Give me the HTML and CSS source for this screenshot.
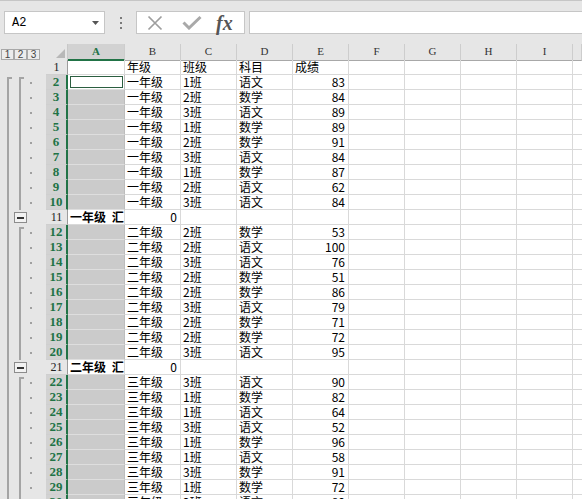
FILE: index.html
```html
<!DOCTYPE html>
<html lang="zh">
<head>
<meta charset="utf-8">
<title>Sheet</title>
<link rel="stylesheet" href="styles.css">
</head>
<body>
<div class="fbar">
  <div class="namebox"><span>A2</span><svg width="7" height="4" viewBox="0 0 7 4"><polygon points="0,0 7,0 3.5,4" fill="#555"/></svg></div>
  <div class="vdots"><i></i><i></i><i></i></div>
  <div class="fxbox">
    <svg class="ix" width="16" height="16" viewBox="0 0 16 16"><path d="M1.5 1.5 L14.5 14.5 M14.5 1.5 L1.5 14.5" stroke="#9e9e9e" stroke-width="1.7" fill="none"/></svg>
    <svg class="ic" width="20" height="15" viewBox="0 0 20 15"><polyline points="1.5,7.5 7,13 18.5,2" stroke="#a9a9a9" stroke-width="3" fill="none"/></svg>
    <span class="fx">fx</span>
  </div>
  <div class="finput"></div>
</div>
<div class="sheet">
  <div class="row hdr">
    <div class="lvls"><span>1</span><span>2</span><span>3</span></div>
    <div class="corner"><svg width="9" height="9" viewBox="0 0 9 9"><polygon points="9,0 9,9 0,9" fill="#b8b8b8"/></svg></div>
    <div class="ch sel">A</div><div class="ch">B</div><div class="ch">C</div><div class="ch">D</div><div class="ch">E</div><div class="ch">F</div><div class="ch">G</div><div class="ch">H</div><div class="ch">I</div><div class="ch"></div>
  </div>
  <div class="row"><div class="o"></div><div class="rh">1</div><div class="c"></div><div class="c">年级</div><div class="c">班级</div><div class="c">科目</div><div class="c">成绩</div><div class="rest"></div></div>
  <div class="row"><div class="o"><i class="l1 start"></i><i class="l2 start"></i><i class="dot"></i></div><div class="rh sel">2</div><div class="c a act"><span></span></div><div class="c">一年级</div><div class="c">1班</div><div class="c">语文</div><div class="c n">83</div><div class="rest"></div></div>
  <div class="row"><div class="o"><i class="l1"></i><i class="l2"></i><i class="dot"></i></div><div class="rh sel">3</div><div class="c a"></div><div class="c">一年级</div><div class="c">2班</div><div class="c">数学</div><div class="c n">84</div><div class="rest"></div></div>
  <div class="row"><div class="o"><i class="l1"></i><i class="l2"></i><i class="dot"></i></div><div class="rh sel">4</div><div class="c a"></div><div class="c">一年级</div><div class="c">3班</div><div class="c">语文</div><div class="c n">89</div><div class="rest"></div></div>
  <div class="row"><div class="o"><i class="l1"></i><i class="l2"></i><i class="dot"></i></div><div class="rh sel">5</div><div class="c a"></div><div class="c">一年级</div><div class="c">1班</div><div class="c">数学</div><div class="c n">89</div><div class="rest"></div></div>
  <div class="row"><div class="o"><i class="l1"></i><i class="l2"></i><i class="dot"></i></div><div class="rh sel">6</div><div class="c a"></div><div class="c">一年级</div><div class="c">2班</div><div class="c">数学</div><div class="c n">91</div><div class="rest"></div></div>
  <div class="row"><div class="o"><i class="l1"></i><i class="l2"></i><i class="dot"></i></div><div class="rh sel">7</div><div class="c a"></div><div class="c">一年级</div><div class="c">3班</div><div class="c">语文</div><div class="c n">84</div><div class="rest"></div></div>
  <div class="row"><div class="o"><i class="l1"></i><i class="l2"></i><i class="dot"></i></div><div class="rh sel">8</div><div class="c a"></div><div class="c">一年级</div><div class="c">1班</div><div class="c">数学</div><div class="c n">87</div><div class="rest"></div></div>
  <div class="row"><div class="o"><i class="l1"></i><i class="l2"></i><i class="dot"></i></div><div class="rh sel">9</div><div class="c a"></div><div class="c">一年级</div><div class="c">2班</div><div class="c">语文</div><div class="c n">62</div><div class="rest"></div></div>
  <div class="row"><div class="o"><i class="l1"></i><i class="l2"></i><i class="dot"></i></div><div class="rh sel">10</div><div class="c a"></div><div class="c">一年级</div><div class="c">3班</div><div class="c">语文</div><div class="c n">84</div><div class="rest"></div></div>
  <div class="row"><div class="o"><i class="l1"></i><i class="minus"><b></b></i></div><div class="rh">11</div><div class="c b">一年级 汇总</div><div class="c n">0</div><div class="c"></div><div class="c"></div><div class="c"></div><div class="rest"></div></div>
  <div class="row"><div class="o"><i class="l1"></i><i class="l2 start"></i><i class="dot"></i></div><div class="rh sel">12</div><div class="c a"></div><div class="c">二年级</div><div class="c">2班</div><div class="c">数学</div><div class="c n">53</div><div class="rest"></div></div>
  <div class="row"><div class="o"><i class="l1"></i><i class="l2"></i><i class="dot"></i></div><div class="rh sel">13</div><div class="c a"></div><div class="c">二年级</div><div class="c">2班</div><div class="c">语文</div><div class="c n">100</div><div class="rest"></div></div>
  <div class="row"><div class="o"><i class="l1"></i><i class="l2"></i><i class="dot"></i></div><div class="rh sel">14</div><div class="c a"></div><div class="c">二年级</div><div class="c">3班</div><div class="c">语文</div><div class="c n">76</div><div class="rest"></div></div>
  <div class="row"><div class="o"><i class="l1"></i><i class="l2"></i><i class="dot"></i></div><div class="rh sel">15</div><div class="c a"></div><div class="c">二年级</div><div class="c">2班</div><div class="c">数学</div><div class="c n">51</div><div class="rest"></div></div>
  <div class="row"><div class="o"><i class="l1"></i><i class="l2"></i><i class="dot"></i></div><div class="rh sel">16</div><div class="c a"></div><div class="c">二年级</div><div class="c">2班</div><div class="c">数学</div><div class="c n">86</div><div class="rest"></div></div>
  <div class="row"><div class="o"><i class="l1"></i><i class="l2"></i><i class="dot"></i></div><div class="rh sel">17</div><div class="c a"></div><div class="c">二年级</div><div class="c">3班</div><div class="c">语文</div><div class="c n">79</div><div class="rest"></div></div>
  <div class="row"><div class="o"><i class="l1"></i><i class="l2"></i><i class="dot"></i></div><div class="rh sel">18</div><div class="c a"></div><div class="c">二年级</div><div class="c">2班</div><div class="c">数学</div><div class="c n">71</div><div class="rest"></div></div>
  <div class="row"><div class="o"><i class="l1"></i><i class="l2"></i><i class="dot"></i></div><div class="rh sel">19</div><div class="c a"></div><div class="c">二年级</div><div class="c">2班</div><div class="c">数学</div><div class="c n">72</div><div class="rest"></div></div>
  <div class="row"><div class="o"><i class="l1"></i><i class="l2"></i><i class="dot"></i></div><div class="rh sel">20</div><div class="c a"></div><div class="c">二年级</div><div class="c">3班</div><div class="c">语文</div><div class="c n">95</div><div class="rest"></div></div>
  <div class="row"><div class="o"><i class="l1"></i><i class="minus"><b></b></i></div><div class="rh">21</div><div class="c b">二年级 汇总</div><div class="c n">0</div><div class="c"></div><div class="c"></div><div class="c"></div><div class="rest"></div></div>
  <div class="row"><div class="o"><i class="l1"></i><i class="l2 start"></i><i class="dot"></i></div><div class="rh sel">22</div><div class="c a"></div><div class="c">三年级</div><div class="c">3班</div><div class="c">语文</div><div class="c n">90</div><div class="rest"></div></div>
  <div class="row"><div class="o"><i class="l1"></i><i class="l2"></i><i class="dot"></i></div><div class="rh sel">23</div><div class="c a"></div><div class="c">三年级</div><div class="c">1班</div><div class="c">数学</div><div class="c n">82</div><div class="rest"></div></div>
  <div class="row"><div class="o"><i class="l1"></i><i class="l2"></i><i class="dot"></i></div><div class="rh sel">24</div><div class="c a"></div><div class="c">三年级</div><div class="c">1班</div><div class="c">语文</div><div class="c n">64</div><div class="rest"></div></div>
  <div class="row"><div class="o"><i class="l1"></i><i class="l2"></i><i class="dot"></i></div><div class="rh sel">25</div><div class="c a"></div><div class="c">三年级</div><div class="c">3班</div><div class="c">语文</div><div class="c n">52</div><div class="rest"></div></div>
  <div class="row"><div class="o"><i class="l1"></i><i class="l2"></i><i class="dot"></i></div><div class="rh sel">26</div><div class="c a"></div><div class="c">三年级</div><div class="c">1班</div><div class="c">数学</div><div class="c n">96</div><div class="rest"></div></div>
  <div class="row"><div class="o"><i class="l1"></i><i class="l2"></i><i class="dot"></i></div><div class="rh sel">27</div><div class="c a"></div><div class="c">三年级</div><div class="c">1班</div><div class="c">语文</div><div class="c n">58</div><div class="rest"></div></div>
  <div class="row"><div class="o"><i class="l1"></i><i class="l2"></i><i class="dot"></i></div><div class="rh sel">28</div><div class="c a"></div><div class="c">三年级</div><div class="c">3班</div><div class="c">数学</div><div class="c n">91</div><div class="rest"></div></div>
  <div class="row"><div class="o"><i class="l1"></i><i class="l2"></i><i class="dot"></i></div><div class="rh sel">29</div><div class="c a"></div><div class="c">三年级</div><div class="c">1班</div><div class="c">数学</div><div class="c n">72</div><div class="rest"></div></div>
  <div class="row"><div class="o"><i class="l1"></i><i class="l2"></i><i class="dot"></i></div><div class="rh sel">30</div><div class="c a"></div><div class="c">三年级</div><div class="c">2班</div><div class="c">语文</div><div class="c n">80</div><div class="rest"></div></div>
</div>
</body>
</html>
```
FILE: styles.css
```css
* { box-sizing: border-box; }
html, body { margin: 0; padding: 0; }
body {
  width: 582px;
  height: 499px;
  overflow: hidden;
  background: #fff;
  font-family: "Noto Sans CJK SC", sans-serif;
  color: #000;
}

/* formula bar */
.fbar {
  display: flex;
  align-items: center;
  height: 44px;
  background: #e6e6e6;
  border-top: 1px solid #c6c6c6;
  padding: 10px 0 10px 4px;
}
.namebox {
  width: 101px;
  height: 23px;
  background: #fff;
  border: 1px solid #c6c6c6;
  display: flex;
  align-items: center;
  justify-content: space-between;
  padding: 0 5px 0 7px;
  font: 12px "Liberation Mono", monospace;
  color: #000;
}
.vdots {
  margin-left: 15px;
  display: flex;
  flex-direction: column;
  gap: 3px;
}
.vdots i {
  display: block;
  width: 2px;
  height: 2px;
  background: #7a7a7a;
}
.fxbox {
  margin-left: 14px;
  width: 109px;
  height: 23px;
  background: #fff;
  border: 1px solid #c6c6c6;
  display: flex;
  align-items: center;
  padding-left: 10px;
}
.ic { margin-left: 19px; }
.fx {
  margin-left: 14px;
  font: italic bold 20px "Liberation Serif", serif;
  color: #555;
  line-height: 20px;
}
.finput {
  margin-left: 4px;
  flex: 1;
  height: 23px;
  background: #fff;
  border: 1px solid #c6c6c6;
  border-right: none;
}

/* sheet */
.sheet { display: flex; flex-direction: column; }
.row {
  display: grid;
  grid-template-columns: 46px 22px 57px repeat(8, 56px) 1fr;
  height: 15px;
}
.row.hdr { height: 16px; background: #e6e6e6; }

.lvls {
  display: flex;
  align-items: center;
  padding-left: 1px;
}
.lvls span {
  width: 13px;
  height: 11px;
  border: 1px solid #a8a8a8;
  background: #ececec;
  font: 10px "Liberation Sans", sans-serif;
  line-height: 9px;
  text-align: center;
  color: #444;
  margin-top: 3px;
}
.corner {
  display: flex;
  justify-content: flex-end;
  align-items: flex-end;
  padding: 0 2px 2px 0;
  border-right: 1px solid #c8c8c8;
  border-bottom: 1px solid #a8a8a8;
}
.ch {
  border-right: 1px solid #cdcdcd;
  border-bottom: 1px solid #a8a8a8;
  text-align: center;
  font: 11px "Liberation Serif", serif;
  line-height: 15px;
  color: #333;
}
.ch.sel {
  background: #d2d2d2;
  color: #217346;
  font-weight: bold;
  border-bottom: 2px solid #217346;
}

/* outline column */
.o {
  display: flex;
  background: #e6e6e6;
}
.o .l1, .o .l2, .o .dot { display: block; }
.l1, .l2 {
  width: 5px;
  border-left: 2px solid #a4a4a4;
}
.l1 { margin-left: 7px; }
.l2 { margin-left: 7px; }
.o .start {
  border-top: 2px solid #a4a4a4;
  margin-top: 2px;
}
.dot {
  margin-left: 6px;
  width: 2px;
  height: 2px;
  align-self: center;
  background: #a0a0a0;
}
.o .minus {
  margin-left: 2px;
  width: 13px;
  height: 11px;
  align-self: center;
  border: 1px solid #8c8c8c;
  background: #f2f2f2;
  display: flex;
  align-items: center;
  justify-content: center;
}
.minus b {
  display: block;
  width: 7px;
  height: 2px;
  background: #333;
}

/* row headers */
.rh {
  background: #e6e6e6;
  border-bottom: 1px solid #cfcfcf;
  border-right: 1px solid #9c9c9c;
  text-align: center;
  font: 12px "Liberation Serif", serif;
  line-height: 14px;
  color: #222;
}
.rh.sel {
  background: #d2d2d2;
  color: #217346;
  font-weight: bold;
  font-size: 13px;
  border-right: 2px solid #217346;
}

/* cells */
.c {
  border-right: 1px solid #d9d9d9;
  border-bottom: 1px solid #d9d9d9;
  padding: 0 2px;
  font-size: 12px;
  line-height: 14px;
  white-space: nowrap;
}
.c.n { text-align: right; padding-right: 3px; }
.c.b { font-weight: bold; overflow: hidden; word-spacing: 3px; }
.c.a {
  background: #cbcbcb;
  border-bottom-color: #dedede;
  border-right-color: #bdbdbd;
}
.c.act {
  background: #fff;
  padding: 1px 1px 1px 2px;
}
.c.act span {
  display: block;
  height: 100%;
  border: 1px solid #2b5e40;
}
.rest {
  grid-column: span 5;
  border-bottom: 1px solid #d9d9d9;
  background: repeating-linear-gradient(to right, transparent 0 55px, #d9d9d9 55px 56px);
}
```
